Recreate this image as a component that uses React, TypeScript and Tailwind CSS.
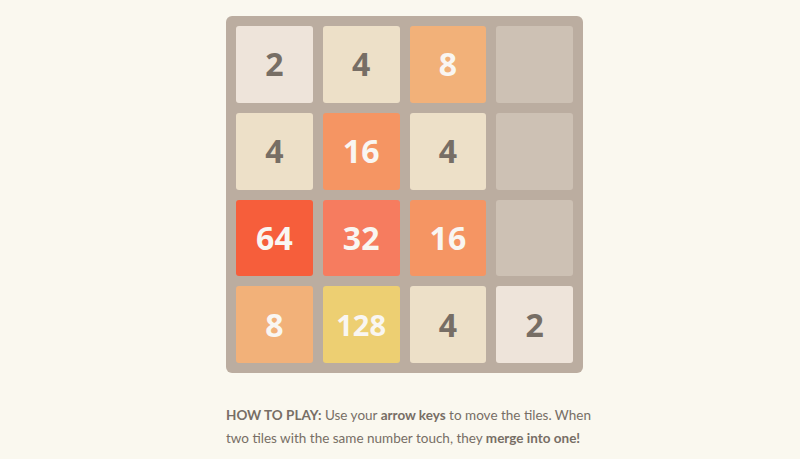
const tiles: (number | null)[] = [
  2, 4, 8, null,
  4, 16, 4, null,
  64, 32, 16, null,
  8, 128, 4, 2,
];

const tileStyle: Record<number, string> = {
  2: "bg-[#eee4da] text-[#776e65] text-[32px]",
  4: "bg-[#ede0c8] text-[#776e65] text-[32px]",
  8: "bg-[#f2b179] text-[#f9f6f2] text-[32px]",
  16: "bg-[#f59563] text-[#f9f6f2] text-[32px]",
  32: "bg-[#f67c5f] text-[#f9f6f2] text-[32px]",
  64: "bg-[#f65e3b] text-[#f9f6f2] text-[32px]",
  128: "bg-[#edcf72] text-[#f9f6f2] text-[29px]",
};

export default function App() {
  return (
    <div className="min-h-[459px] w-full bg-[#faf8ef] font-['Open_Sans',sans-serif] pt-[16px] pl-[226px]">
      {/* board */}
      <div className="w-[357px] h-[357px] rounded-[6px] bg-[#bbada0] p-[10px] grid grid-cols-4 grid-rows-4 gap-[10px]">
        {tiles.map((v, i) =>
          v === null ? (
            <div key={i} className="rounded-[3px] bg-[#cdc1b4]" />
          ) : (
            <div
              key={i}
              className={`rounded-[3px] flex items-center justify-center font-bold ${tileStyle[v]}`}
            >
              {v}
            </div>
          ),
        )}
      </div>

      {/* how to play */}
      <p className="mt-[31px] whitespace-nowrap font-['Lato',sans-serif] text-[13.5px] leading-[23px] text-[#776e65]">
        <strong>HOW TO PLAY:</strong> Use your <strong>arrow keys</strong> to
        move the tiles. When
        <br />
        two tiles with the same number touch, they{" "}
        <strong>merge into one!</strong>
      </p>
    </div>
  );
}
